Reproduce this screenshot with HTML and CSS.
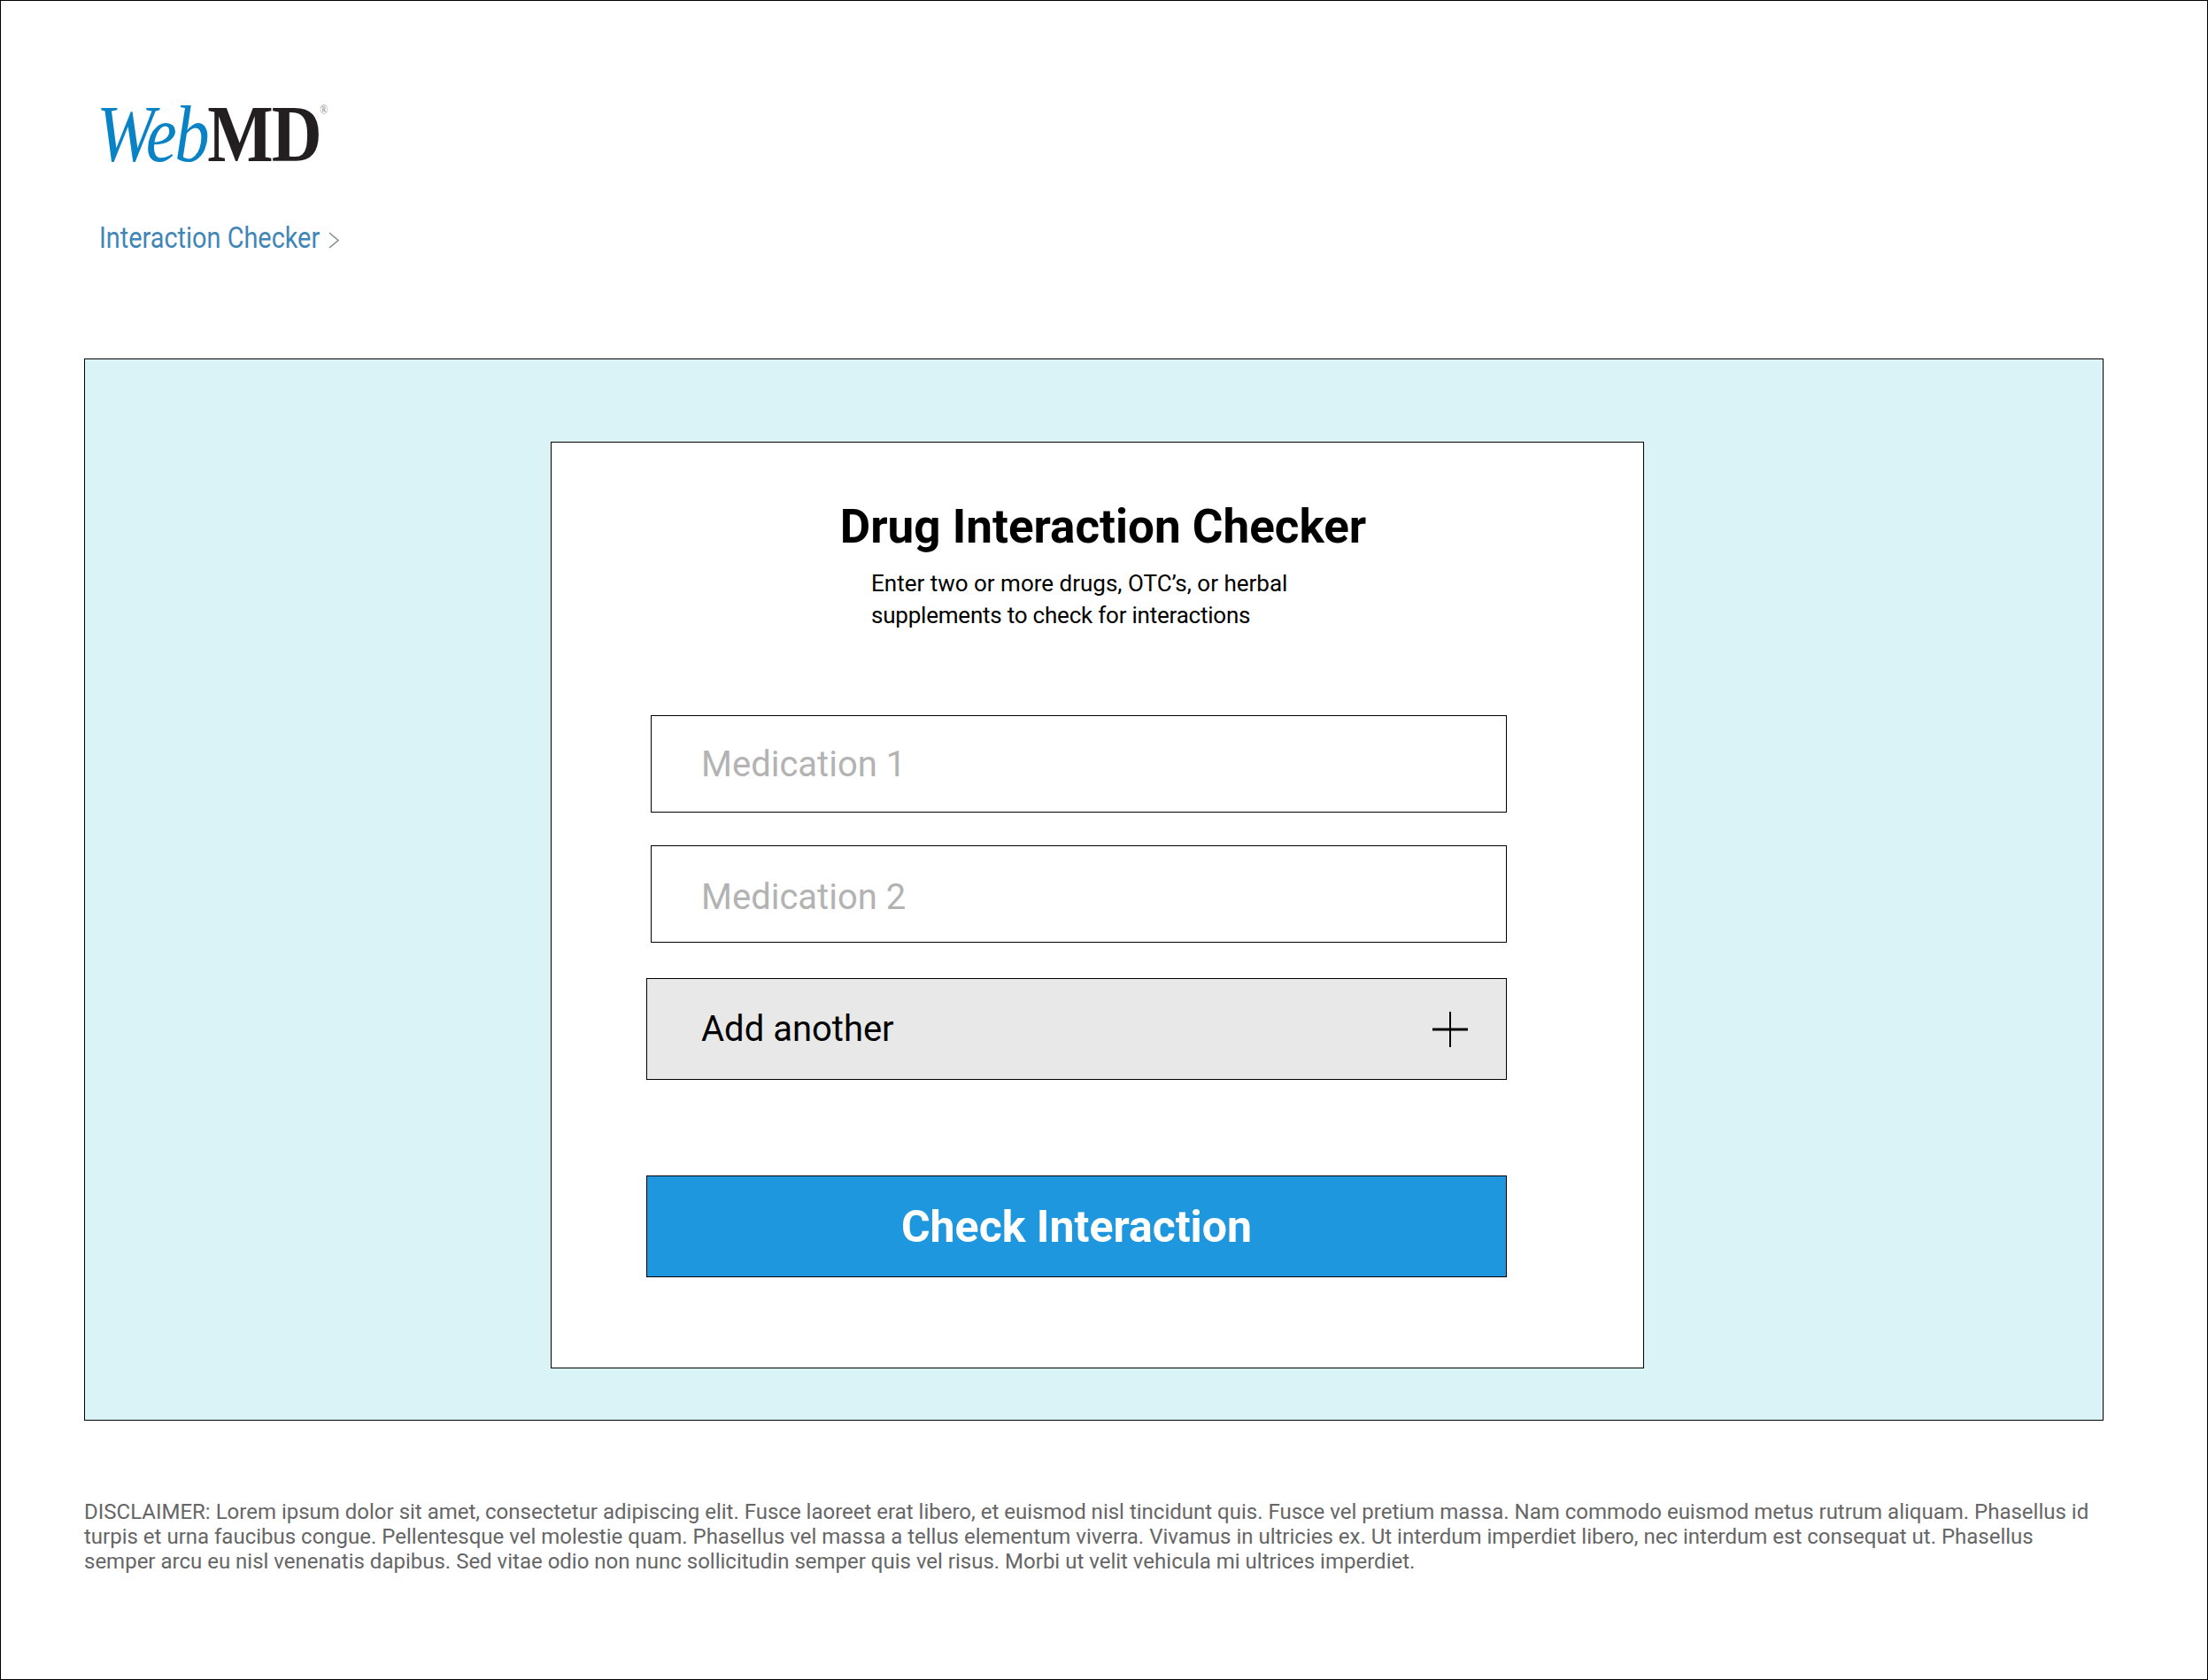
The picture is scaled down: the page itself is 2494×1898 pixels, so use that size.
FILE: index.html
```html
<!DOCTYPE html>
<html lang="en">
<head>
  <meta charset="UTF-8" />
  <title>Drug Interaction Checker</title>
  <link rel="stylesheet" href="styles.css">
</head>
<body>
  <div class="frame">
    <div class="logo"><span class="logo-web">Web</span><span class="logo-md">MD</span><span class="logo-reg">®</span></div>

    <div class="crumb">
      <a class="crumb-link" href="#">Interaction Checker</a>
      <svg class="crumb-icon" width="12" height="19" viewBox="0 0 12 19">
        <path d="M1 1 L11 9.5 L1 18" fill="none" stroke="#8a8f94" stroke-width="1.6" />
      </svg>
    </div>

    <div class="panel">
      <div class="card">
        <h1>Drug Interaction Checker</h1>
        <p class="intro">Enter two or more drugs, OTC’s, or herbal<br><span class="intro-tight">supplements to check for interactions</span></p>

        <input class="med-input" type="text" placeholder="Medication 1">
        <input class="med-input" type="text" placeholder="Medication 2">

        <button class="add-btn">
          <span>Add another</span>
          <svg width="40" height="40" viewBox="0 0 40 40">
            <path d="M0 20 H40" stroke="#000" stroke-width="3" />
            <path d="M20 0 V40" stroke="#000" stroke-width="2" />
          </svg>
        </button>

        <button class="check-btn">Check Interaction</button>
      </div>
    </div>

    <p class="disclaimer">DISCLAIMER: Lorem ipsum dolor sit amet, consectetur adipiscing elit. Fusce laoreet erat libero, et euismod nisl tincidunt quis. Fusce vel pretium massa. Nam commodo euismod metus rutrum aliquam. Phasellus id<br>turpis et urna faucibus congue. Pellentesque vel molestie quam. Phasellus vel massa a tellus elementum viverra. Vivamus in ultricies ex. Ut interdum imperdiet libero, nec interdum est consequat ut. Phasellus<br>semper arcu eu nisl venenatis dapibus. Sed vitae odio non nunc sollicitudin semper quis vel risus. Morbi ut velit vehicula mi ultrices imperdiet.</p>
  </div>
</body>
</html>
```

FILE: styles.css
```css
* {
  box-sizing: border-box;
}

body {
  margin: 0;
  padding: 0;
  font-family: Roboto, Arial, sans-serif;
  background: #fff;
  color: #000;
}

.frame {
  height: 1898px;
  border: 1px solid #000;
  padding: 100px 117px 0 94px;
  overflow: hidden;
}

.logo {
  display: flex;
  align-items: flex-start;
  height: 100px;
  margin-left: 14px;
  font-family: "Liberation Serif", serif;
  font-size: 92px;
  line-height: 100px;
  transform: scaleX(0.857);
  transform-origin: left top;
}

.logo-web {
  color: #0a82c6;
  font-style: italic;
  letter-spacing: -3px;
}

.logo-md {
  color: #231f20;
  font-weight: bold;
  letter-spacing: -2px;
}

.logo-reg {
  color: #8a8a8a;
  font-size: 14px;
  line-height: 48px;
  margin-left: -1px;
}

.crumb {
  display: flex;
  align-items: center;
  height: 40px;
  margin: 47px 0 0 17px;
}

.crumb-link {
  font-size: 33px;
  color: #3f86b8;
  text-decoration: none;
  transform: scaleX(0.875);
  transform-origin: left center;
  margin-right: -26px;
}

.crumb-icon {
  margin-top: 6px;
}

.panel {
  width: 2281px;
  height: 1200px;
  margin-top: 117px;
  padding: 93px 0 0 526px;
  background: #daf3f7;
  border: 1px solid #000;
}

.card {
  width: 1235px;
  height: 1047px;
  padding: 0 97px 0 107px;
  background: #fff;
  border: 1px solid #000;
}

h1 {
  margin: 0;
  padding: 65px 0 0 3px;
  font-size: 53px;
  line-height: 60px;
  font-weight: 700;
  text-align: center;
}

.intro {
  margin: 17px 0 0 254px;
  font-size: 26px;
  line-height: 35.5px;
}

.intro-tight {
  letter-spacing: -0.22px;
}

.med-input {
  display: block;
  width: 967px;
  height: 110px;
  margin: 0 0 37px 5px;
  padding: 0 0 0 56px;
  font-family: Roboto, Arial, sans-serif;
  font-size: 40px;
  background: #fff;
  border: 1px solid #000;
  border-radius: 0;
}

.med-input::placeholder {
  color: #b3b3b3;
  opacity: 1;
}

.intro + .med-input {
  margin-top: 95px;
}

.med-input + .med-input {
  padding-top: 6px;
}

.add-btn {
  display: flex;
  justify-content: space-between;
  align-items: center;
  width: 972px;
  height: 115px;
  margin-top: 40px;
  padding: 0 43px 0 61px;
  font-family: Roboto, Arial, sans-serif;
  font-size: 40px;
  color: #000;
  background: #e8e8e8;
  border: 1px solid #000;
}

.check-btn {
  display: block;
  width: 972px;
  height: 115px;
  margin-top: 108px;
  font-family: Roboto, Arial, sans-serif;
  font-size: 50px;
  font-weight: 700;
  color: #fff;
  background: #1f97de;
  border: 1px solid #000;
}

.disclaimer {
  width: 2300px;
  margin: 89px 0 0 0;
  font-size: 24px;
  line-height: 28px;
  color: #666;
  white-space: nowrap;
}
```
